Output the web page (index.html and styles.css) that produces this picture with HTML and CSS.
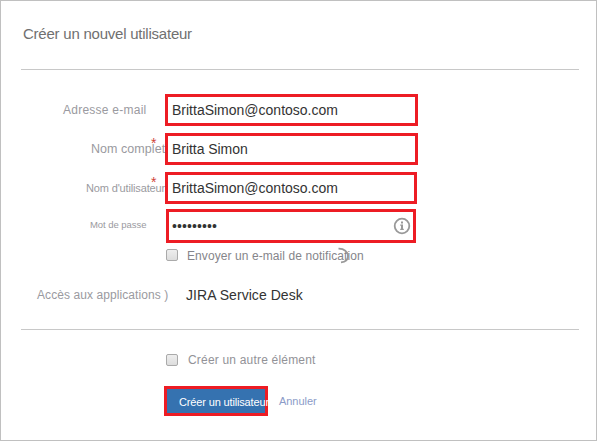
FILE: index.html
```html
<!DOCTYPE html>
<html lang="fr">
<head>
<meta charset="utf-8">
<title>Créer un nouvel utilisateur</title>
<link rel="stylesheet" href="styles.css">
</head>
<body>
<main class="dialog">
  <header class="head"><h1 class="title">Créer un nouvel utilisateur</h1></header>
  <form class="form">
    <div class="row">
      <label class="label email-label">Adresse e-mail</label>
      <div class="field"><span class="value">BrittaSimon@contoso.com</span></div>
    </div>
    <div class="row">
      <label class="label name-label">Nom complet<span class="req">*</span></label>
      <div class="field"><span class="value value-name">Britta Simon</span></div>
    </div>
    <div class="row">
      <label class="label user-label">Nom d'utilisateur<span class="req">*</span></label>
      <div class="field field-user"><span class="value">BrittaSimon@contoso.com</span></div>
    </div>
    <div class="row row-pass">
      <label class="label pass-label">Mot de passe</label>
      <div class="field field-pass">
        <span class="dots">•••••••••</span>
        <svg class="info" viewBox="0 0 18 18"><circle cx="9" cy="9" r="7.3" fill="none" stroke="#999" stroke-width="1.8"/><path d="M8 4.5h2v2H8zM7.2 7.6H10v4.2h.8V13H7.2v-1.2H8V8.8h-.8z" fill="#999"/></svg>
      </div>
    </div>
    <div class="check-row">
      <span class="box"></span>
      <span class="notify">Envoyer un e-mail de notification
        <svg class="arc" viewBox="0 0 14 18"><path d="M1.5 1.7C7 1.5 11 4.8 11 9S8.5 15 4 15.4" fill="none" stroke="#999" stroke-width="1.8"/></svg>
      </span>
    </div>
    <div class="apps"><span class="apps-label">Accès aux applications )</span><span class="apps-value">JIRA Service Desk</span></div>
  </form>
  <footer class="foot">
    <div class="check-row"><span class="box"></span><span class="another">Créer un autre élément</span></div>
    <div class="actions"><button class="submit" type="button"><span class="submit-text">Créer un utilisateur</span></button><a class="cancel">Annuler</a></div>
  </footer>
</main>
</body>
</html>
```
FILE: styles.css
```css
* { box-sizing: border-box; }
body { margin: 0; background: #fff; font-family: "Liberation Sans", Arial, sans-serif; }
.dialog { width: 597px; height: 441px; border: 1px solid #c0c0c0; padding: 0 13px 0 20px; overflow: hidden; white-space: nowrap; }
.head { height: 69px; border-bottom: 1px solid #c8c8c8; padding: 24px 0 0 2px; width: 558px; }
.title { margin: 0; font-size: 15px; line-height: 18px; font-weight: 400; color: #707070; letter-spacing: -0.23px; }
.form { width: 558px; height: 260px; padding-top: 24px; border-bottom: 1px solid #c8c8c8; }
.row { display: flex; height: 39px; }
.label { position: relative; width: 144px; flex: none; color: #9a9aa0; line-height: 32px; }
.email-label { padding-left: 42px; font-size: 12px; letter-spacing: 0.25px; }
.name-label { padding-left: 70px; font-size: 12.5px; letter-spacing: 0.05px; }
.user-label { padding-left: 65px; font-size: 11px; letter-spacing: -0.15px; }
.pass-label { padding-left: 69px; font-size: 9.5px; letter-spacing: -0.05px; }
.req { position: absolute; left: 130px; top: -6px; font-size: 14px; letter-spacing: 0; color: #d04437; }
.field { width: 253px; height: 32px; border: 3px solid #ed1c24; padding-left: 4px; display: flex; align-items: center; }
.value { font-size: 14px; color: #333; line-height: 20px; margin-top: -1px; }
.value-name { letter-spacing: -0.05px; }
.field-user { width: 252px; }
.row-pass { height: 34px; margin-top: -2px; }
.field-pass { width: 250px; height: 34px; margin-left: 1px; justify-content: space-between; padding-left: 3px; padding-right: 2px; }
.dots { font-size: 14px; color: #333; letter-spacing: 0.1px; }
.info { width: 18px; height: 18px; }
.check-row { display: flex; align-items: center; height: 24px; padding-left: 145px; }
.box { width: 12px; height: 12px; border: 1px solid #aaa; border-radius: 2px; background: linear-gradient(#eee, #ddd); flex: none; }
.notify { position: relative; top: 1px; margin-left: 9px; font-size: 12px; letter-spacing: 0.08px; color: #85858a; }
.arc { position: absolute; left: 150px; top: -2px; width: 14px; height: 18px; }
.apps { display: flex; align-items: center; height: 20px; margin-top: 18px; }
.apps-label { width: 165px; padding-left: 16px; font-size: 12px; letter-spacing: 0.08px; color: #9a9aa0; }
.apps-value { font-size: 14px; letter-spacing: 0.05px; color: #333; }
.foot { padding-top: 18px; }
.another { margin-left: 10px; font-size: 12px; letter-spacing: 0.19px; color: #929297; }
.actions { display: flex; align-items: center; margin: 14px 0 0 143px; height: 30px; }
.submit { width: 104px; height: 30px; border: 0; box-shadow: inset 0 0 0 3px #ed1c24; background: #3572b0; padding: 1px 0 0 15px; overflow: hidden; text-align: left; font: 11px "Liberation Sans", Arial, sans-serif; letter-spacing: -0.15px; color: #fff; white-space: nowrap; }
.cancel { margin-left: 11px; font-size: 11px; letter-spacing: -0.05px; color: #8b9bc8; }
```
